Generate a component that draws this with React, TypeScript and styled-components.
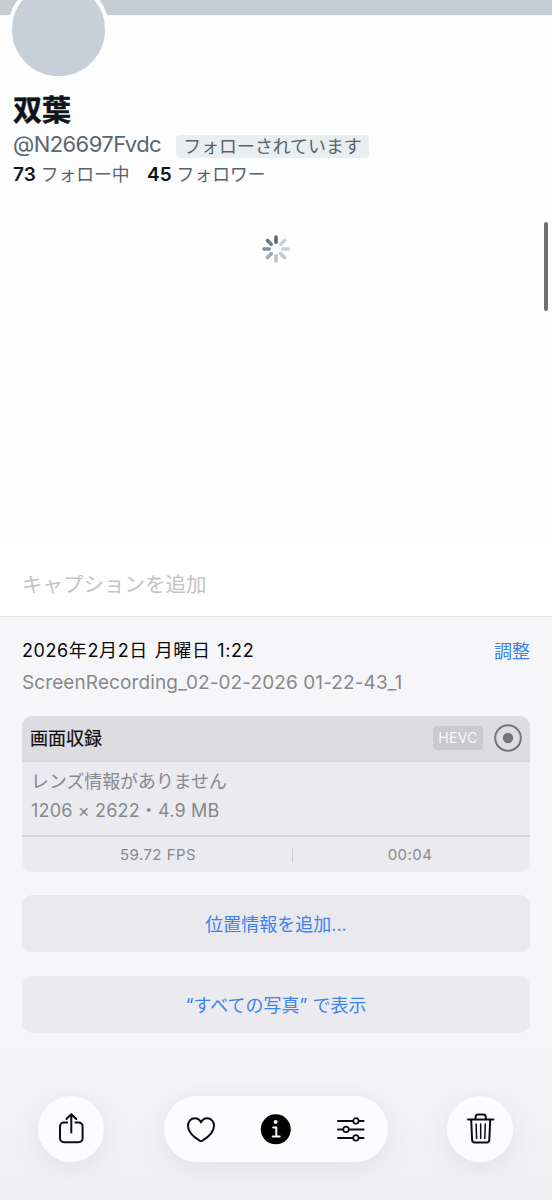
import React from "react";
import styled, { createGlobalStyle } from "styled-components";

const Global = createGlobalStyle`
  * { box-sizing: border-box; }
  body {
    margin: 0;
    background: #f6f6f9;
    font-family: Inter, "Noto Sans CJK JP", sans-serif;
    white-space: nowrap;
  }
`;

const Screen = styled.main`
  position: relative;
  display: flex;
  flex-direction: column;
  width: 552px;
  height: 1200px;
  overflow: hidden;
  background: linear-gradient(#f6f6f9 0 1040px, #f4f4f8 1090px, #f0f0f2 1200px);
`;

const Profile = styled.section`
  position: relative;
  height: 542px;
  background: #fdfdfd;
`;

const Banner = styled.div`
  height: 15px;
  background: #c4cdd3;
`;

const Avatar = styled.div`
  position: absolute;
  left: 8px;
  top: -21px;
  width: 101px;
  height: 101px;
  border: 4px solid #fdfdfd;
  border-radius: 50%;
  background: #c7d0d8;
`;

const ProfileText = styled.div`
  display: flex;
  flex-direction: column;
  padding: 75px 13px 0;
`;

const Name = styled.h1`
  margin: 0;
  height: 39px;
  line-height: 41px;
  font-size: 29px;
  font-weight: 700;
  -webkit-text-stroke: 0.5px #0f1419;
  color: #0f1419;
`;

const HandleRow = styled.div`
  display: flex;
  align-items: center;
  gap: 15px;
  height: 30px;
`;

const Handle = styled.span`
  width: 148px;
  font-size: 22px;
  line-height: 30px;
  letter-spacing: -0.58px;
  color: #5b6670;
`;

const FollowBadge = styled.span`
  width: 193px;
  height: 23px;
  margin-top: 4px;
  border-radius: 4px;
  background: #e9eef0;
  text-align: center;
  font-size: 17.9px;
  line-height: 23px;
  color: #56626c;
`;

const Counts = styled.div`
  display: flex;
  height: 30px;
  line-height: 32px;
  font-size: 17.8px;
  color: #56626c;
`;

const Count = styled.div<{ $width: number }>`
  display: flex;
  gap: 5px;
  width: ${(p) => p.$width}px;

  b {
    font-size: 19px;
    font-weight: 600;
    color: #0f1419;
  }
`;

const SpinnerWrap = styled.div`
  display: flex;
  justify-content: center;
  margin-top: 45px;
`;

const ScrollThumb = styled.div`
  position: absolute;
  left: 544px;
  top: 222px;
  width: 4px;
  height: 89px;
  border-radius: 2px;
  background: #6f6f6f;
`;

const Caption = styled.div`
  height: 75px;
  padding: 0 22px;
  border-bottom: 1px solid #e2e2e5;
  background: #fefefe;
  font-size: 20.5px;
  line-height: 86px;
  color: #c3c3c6;
`;

const Info = styled.section`
  display: flex;
  flex-direction: column;
  padding: 18px 22px 0;
`;

const DateRow = styled.div`
  display: flex;
  justify-content: space-between;
  height: 32px;
  line-height: 32px;
  font-size: 18px;
`;

const DateText = styled.span`
  color: #0a0a0b;
  font-size: 18px;
  line-height: 31px;
  letter-spacing: 0.6px;
  word-spacing: 1.2px;
`;

const AdjustButton = styled.button`
  padding: 1px 0 0;
  border: 0;
  background: none;
  font: inherit;
  color: #3b82ee;
`;

const FileName = styled.div`
  height: 49px;
  line-height: 32px;
  font-size: 19px;
  letter-spacing: 0.1px;
  color: #88888c;
`;

const Card = styled.div`
  height: 156px;
  border-radius: 11px;
  overflow: hidden;
  background: #ebebef;
`;

const CardHeader = styled.div`
  display: flex;
  align-items: center;
  height: 46px;
  padding: 0 8px;
  border-bottom: 2px solid #d7d7db;
  background: #dddde1;
`;

const CardTitle = styled.span`
  padding-bottom: 2px;
  font-size: 18px;
  -webkit-text-stroke: 0.2px;
  color: #0d0d0e;
`;

const CodecTag = styled.span`
  width: 50px;
  height: 24px;
  margin: 0 11px 0 auto;
  border-radius: 4px;
  background: #c9c9ce;
  text-align: center;
  font-size: 14px;
  line-height: 24px;
  letter-spacing: 0.3px;
  color: #f8f8fa;
`;

const CardBody = styled.div`
  display: flex;
  flex-direction: column;
  height: 75px;
  padding: 5px 9px 0;
  border-bottom: 2px solid #d7d7db;
  font-size: 17.9px;
  line-height: 29px;
  color: #88888c;
`;

const Dimensions = styled.span`
  font-size: 18px;
  letter-spacing: 0.17px;
`;

const Metrics = styled.div`
  display: grid;
  grid-template-columns: 270px 1px 1fr;
  align-items: center;
  height: 35px;
  text-align: center;
  font-size: 15px;
  letter-spacing: 0.45px;
  color: #88888c;

  span:first-child {
    padding-left: 2px;
  }

  span:last-child {
    padding-right: 3px;
  }
`;

const MetricRule = styled.i`
  height: 14px;
  background: #cdcdd2;
`;

const ActionButton = styled.button<{ $tone: string; $gap: number }>`
  height: 57px;
  margin-top: ${(p) => p.$gap}px;
  padding: 0 0 1px;
  border: 0;
  border-radius: 11px;
  background: ${(p) => p.$tone};
  font-family: inherit;
  font-size: 18px;
  color: #3b82ee;
`;

const Toolbar = styled.nav`
  position: absolute;
  left: 38px;
  right: 39px;
  top: 1095.5px;
  display: flex;
  justify-content: space-between;
`;

const Pill = styled.div<{ $width: number }>`
  display: flex;
  align-items: center;
  justify-content: center;
  gap: 41px;
  width: ${(p) => p.$width}px;
  height: 66px;
  border-radius: 33px;
  background: #fcfcfe;
  box-shadow: 0 6px 34px rgba(0, 0, 0, 0.075);
`;

const tints = ["#5f676d", "#ced2d4", "#c9cdd0", "#c4c8cb", "#bec3c6", "#a4aaae", "#899095", "#717980"];

const Spinner = () => (
  <svg width="30" height="30" viewBox="-15 -15 30 30">
    {tints.map((c, i) => (
      <line key={i} y1="-6.7" y2="-12" stroke={c} strokeWidth="3.6" strokeLinecap="round" transform={`rotate(${i * 45})`} />
    ))}
  </svg>
);

const Icon = styled.svg.attrs({ width: 34, height: 34, viewBox: "0 0 34 34" })`
  flex: none;
  fill: none;
  stroke: #0c0c0e;
  stroke-width: 2;
  stroke-linecap: round;
  stroke-linejoin: round;
`;

const RecordIcon = () => (
  <svg width="28" height="28" viewBox="0 0 28 28">
    <circle cx="14" cy="14" r="12.8" fill="none" stroke="#75757a" strokeWidth="2" />
    <circle cx="14" cy="14" r="5.2" fill="#75757a" />
  </svg>
);

const ShareIcon = () => (
  <Icon>
    <path d="M13.2 10.5H10a4 4 0 0 0-4 4v11.7a4 4 0 0 0 4 4h14.6a4 4 0 0 0 4-4V14.5a4 4 0 0 0-4-4H21.4M17.3 20.5V2.4M12.4 7l4.9-4.9L22.2 7" />
  </Icon>
);

const HeartIcon = () => (
  <Icon>
    <path d="M17 29.3C16.6 29.3 16.1 29 15.6 28.7C9.5 24.8 4 20 4 13.9C4 9.3 7 6.3 10.8 6.3C13.6 6.3 15.8 7.8 17 10.4C18.2 7.8 20.4 6.3 23.2 6.3C27 6.3 30 9.3 30 13.9C30 20 24.5 24.8 18.4 28.7C17.9 29 17.4 29.3 17 29.3Z" />
  </Icon>
);

const InfoIcon = () => (
  <Icon>
    <circle cx="16.8" cy="17.3" r="15" fill="#000" stroke="none" />
    <circle cx="16.6" cy="10.1" r="2" fill="#fcfcfe" stroke="none" />
    <path d="M14.2 15.5h3.1v8.8M13.7 24.5h7" stroke="#fcfcfe" />
  </Icon>
);

const SlidersIcon = () => (
  <Icon>
    <path d="M4 8.9h25.6M4 17.4h25.6M4 25.9h25.6" />
    <g fill="#fcfcfe" strokeWidth="1.7">
      <circle cx="21.9" cy="8.9" r="2.7" />
      <circle cx="12" cy="17.4" r="2.7" />
      <circle cx="21.9" cy="25.9" r="2.7" />
    </g>
  </Icon>
);

const TrashIcon = () => (
  <Icon>
    <path d="M5 7.5h25.4M12.6 7.2V5a2.5 2.5 0 0 1 2.5-2.5h5.2A2.5 2.5 0 0 1 22.8 5v2.2M8.2 7.8l.9 20.2a2.6 2.6 0 0 0 2.6 2.5h12a2.6 2.6 0 0 0 2.6-2.5l.9-20.2" />
    <path strokeWidth="1.5" d="M13.1 12.1l.5 14.4M17.7 12.1v14.4M22.3 12.1l-.5 14.4" />
  </Icon>
);

export default function App() {
  return (
    <Screen>
      <Global />
      <Profile>
        <Banner />
        <Avatar />
        <ProfileText>
          <Name>双葉</Name>
          <HandleRow>
            <Handle>@N26697Fvdc</Handle>
            <FollowBadge>フォローされています</FollowBadge>
          </HandleRow>
          <Counts>
            <Count $width={134}><b>73</b><span>フォロー中</span></Count>
            <Count $width={130}><b>45</b><span>フォロワー</span></Count>
          </Counts>
        </ProfileText>
        <SpinnerWrap><Spinner /></SpinnerWrap>
        <ScrollThumb />
      </Profile>
      <Caption>キャプションを追加</Caption>
      <Info>
        <DateRow>
          <DateText>2026年2月2日 月曜日 1:22</DateText>
          <AdjustButton>調整</AdjustButton>
        </DateRow>
        <FileName>ScreenRecording_02-02-2026 01-22-43_1</FileName>
        <Card>
          <CardHeader>
            <CardTitle>画面収録</CardTitle>
            <CodecTag>HEVC</CodecTag>
            <RecordIcon />
          </CardHeader>
          <CardBody>
            <span>レンズ情報がありません</span>
            <Dimensions>1206 × 2622・4.9 MB</Dimensions>
          </CardBody>
          <Metrics>
            <span>59.72 FPS</span>
            <MetricRule />
            <span>00:04</span>
          </Metrics>
        </Card>
        <ActionButton $tone="#e8e8ed" $gap={23}>位置情報を追加...</ActionButton>
        <ActionButton $tone="#ebebef" $gap={24}>“すべての写真” で表示</ActionButton>
      </Info>
      <Toolbar>
        <Pill $width={66}><ShareIcon /></Pill>
        <Pill $width={224}><HeartIcon /><InfoIcon /><SlidersIcon /></Pill>
        <Pill $width={66}><TrashIcon /></Pill>
      </Toolbar>
    </Screen>
  );
}
